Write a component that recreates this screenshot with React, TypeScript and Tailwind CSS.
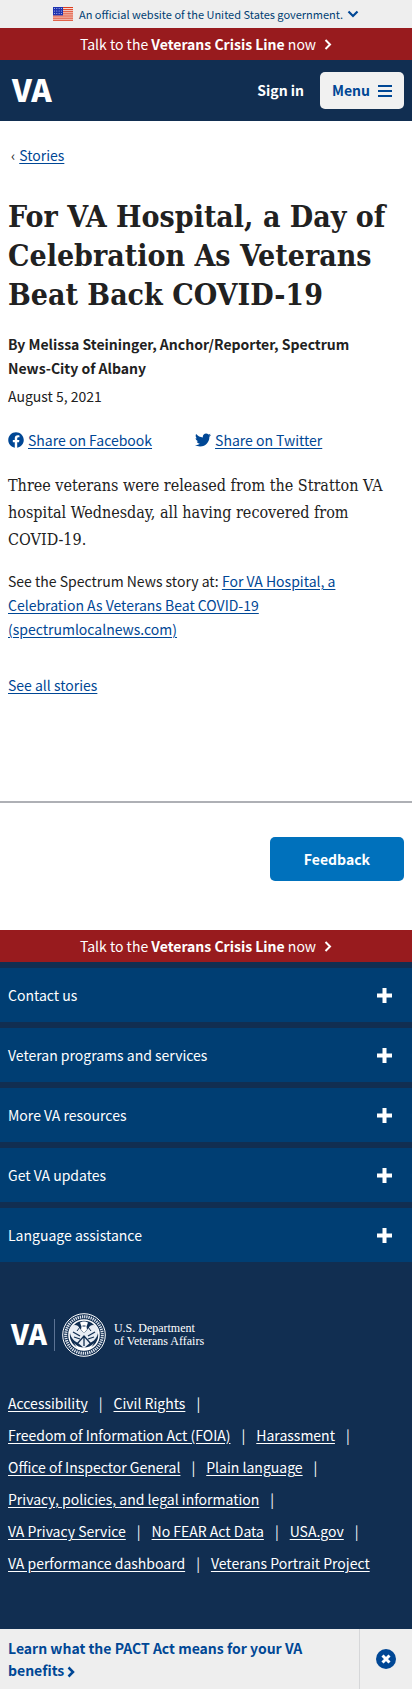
import React from "react";

const links: string[][] = [
  ["Accessibility", "Civil Rights"],
  ["Freedom of Information Act (FOIA)", "Harassment"],
  ["Office of Inspector General", "Plain language"],
  ["Privacy, policies, and legal information"],
  ["VA Privacy Service", "No FEAR Act Data", "USA.gov"],
  ["VA performance dashboard", "Veterans Portrait Project"],
];

const sections = [
  "Contact us",
  "Veteran programs and services",
  "More VA resources",
  "Get VA updates",
  "Language assistance",
];

function Flag() {
  return (
    <svg width="20" height="14" viewBox="0 0 20 14" aria-hidden="true">
      <rect width="20" height="14" fill="#fff" />
      {[0, 2.1, 4.2, 6.3, 8.4, 10.5, 12.6].map((y) => (
        <rect key={y} y={y} width="20" height="1.2" fill="#db3e1f" />
      ))}
      <rect width="10" height="8.400" fill="#1e33b1" />
      {[1.5, 4, 6.5].map((y) =>
        [1.5, 3.8, 6.1, 8.4].map((x) => (
          <circle key={`${x}-${y}`} cx={x} cy={y} r="0.5" fill="#cfd6f5" />
        )),
      )}
    </svg>
  );
}

function CrisisLine() {
  return (
    <div className="flex h-8 items-center justify-center bg-[#981b1e]">
      <button type="button" className="flex items-center gap-2 text-[14px] leading-6 text-white">
        <span>
          Talk to the <strong className="font-bold">Veterans Crisis Line</strong> now
        </span>
        <svg width="8" height="12" viewBox="0 0 8 12" fill="none" stroke="#fff" strokeWidth="2" aria-hidden="true">
          <path d="M1.500 2 6 6.500l-4.500 4.500" />
        </svg>
      </button>
    </div>
  );
}

function Seal() {
  return (
    <svg width="44" height="44" viewBox="0 0 44 44" fill="none" aria-hidden="true">
      <circle cx="22" cy="22" r="21.300" stroke="#fff" strokeWidth="1" />
      <circle cx="22" cy="22" r="18.300" stroke="#dfe5ee" strokeWidth="3" strokeDasharray="1.300 0.900" />
      <circle cx="22" cy="22" r="15" stroke="#fff" strokeWidth="1.600" />
      <path d="M8 15c2-3 5-4 8-2 2 2 3 5 6 7 3-2 4-5 6-7 3-2 6-1 8 2 1 7-2 12-8 15l-6 5-6-5c-6-3-9-8-8-15Z" fill="#e8edf4" />
      <path d="M18 9.500c2-1.500 6-1.500 8 0l-1.500 4 .5 3-3 3.500-3-3.500.5-3Z" fill="#fff" />
      <path d="m11 19 7 4M33 19l-7 4M12 24l6 2M32 24l-6 2M15 31l7-8 7 8M22 24v9" stroke="#112e51" strokeWidth="1.300" />
      <path d="M18 14l-3 4M26 14l3 4M20.500 13h3" stroke="#112e51" />
      <path d="M12 30c5 6 15 6 20 0l-3 5c-4 3-10 3-14 0Z" fill="#fff" />
    </svg>
  );
}

export default function App() {
  return (
    <div className="bg-white font-['Noto_Sans_CJK_SC',sans-serif] text-[14px] leading-6 text-[#212121]">
      <div className="flex h-7 items-center justify-center bg-[#eee]">
        <button type="button" className="flex items-center text-[11px] leading-4 text-[#003e73]">
          <Flag />
          <span className="ml-1.5">An official website of the United States government.</span>
          <svg className="ml-1" width="12" height="8" viewBox="0 0 12 8" fill="none" stroke="#004795" strokeWidth="2.200" aria-hidden="true">
            <path d="m1.500 1.500 4.500 4.500 4.500-4.500" />
          </svg>
        </button>
      </div>
      <CrisisLine />
      <header className="flex h-[61px] items-center justify-between bg-[#112e51] pr-2 pl-3">
        <a href="#home" className="pb-1 text-[31px] leading-8 font-black text-white">VA</a>
        <div className="flex items-center gap-4">
          <button type="button" className="pb-0.5 font-bold text-white">Sign in</button>
          <button type="button" className="flex h-[37px] items-center gap-2 rounded-[5px] bg-[#f1f1f1] px-3 font-bold text-[#004795]">
            <span className="pb-0.5">Menu</span>
            <svg width="14" height="12" viewBox="0 0 14 12" fill="#004795" aria-hidden="true">
              <path d="M0 0h14v2H0zM0 5h14v2H0zM0 10h14v2H0z" />
            </svg>
          </button>
        </div>
      </header>

      <main className="px-2">
        <nav aria-label="Breadcrumb" className="flex gap-1 pt-[22px] pl-[3px]">
          <span>‹</span>
          <a href="#stories" className="text-[#004795] underline underline-offset-2">Stories</a>
        </nav>
        <h1 className="mt-[30px] font-['DejaVu_Serif_Condensed','DejaVu_Serif',serif] text-[30px] leading-[39px] font-bold">
          For VA Hospital, a Day of Celebration As Veterans Beat Back COVID-19
        </h1>
        <p className="mt-[18px] font-bold">
          By Melissa Steininger, Anchor/Reporter, Spectrum <span className="whitespace-nowrap">News-City</span> of Albany
        </p>
        <p className="mt-1">August 5, 2021</p>
        <div className="mt-5 flex gap-[43px] text-[#004795]">
          <a href="#facebook" className="flex items-center gap-1">
            <svg width="16" height="16" viewBox="0 0 512 512" fill="currentColor" aria-hidden="true">
              <path d="M504 256C504 119 393 8 256 8S8 119 8 256c0 123.780 90.690 226.380 209.250 245V327.690h-63V256h63v-54.640c0-62.150 37-96.480 93.670-96.480 27.140 0 55.520 4.840 55.520 4.840v61h-31.280c-30.800 0-40.410 19.120-40.410 38.730V256h68.780l-11 71.690h-57.780V501C413.310 482.380 504 379.780 504 256z" />
            </svg>
            <span className="underline underline-offset-2">Share on Facebook</span>
          </a>
          <a href="#twitter" className="flex items-center gap-1">
            <svg width="16" height="16" viewBox="0 0 512 512" fill="currentColor" aria-hidden="true">
              <path d="M459.370 151.716c.325 4.548.325 9.097.325 13.645 0 138.720-105.583 298.558-298.558 298.558-59.452 0-114.680-17.219-161.137-47.106 8.447.974 16.568 1.299 25.340 1.299 49.055 0 94.213-16.568 130.274-44.832-46.132-.975-84.792-31.188-98.112-72.772 6.498.974 12.995 1.624 19.818 1.624 9.421 0 18.843-1.300 27.614-3.573-48.081-9.747-84.143-51.980-84.143-102.985v-1.299c13.969 7.797 30.214 12.670 47.431 13.319-28.264-18.843-46.781-51.005-46.781-87.391 0-19.492 5.197-37.360 14.294-52.954 51.655 63.675 129.300 105.258 216.365 109.807-1.624-7.797-2.599-15.918-2.599-24.040 0-57.828 46.782-104.934 104.934-104.934 30.213 0 57.502 12.670 76.670 33.137 23.715-4.548 46.456-13.320 66.599-25.340-7.798 24.366-24.366 44.833-46.132 57.827 21.117-2.273 41.584-8.122 60.426-16.243-14.292 20.791-32.161 39.308-52.628 54.253z" />
            </svg>
            <span className="underline underline-offset-2">Share on Twitter</span>
          </a>
        </div>
        <p className="mt-5 font-['DejaVu_Serif_Condensed','DejaVu_Serif',serif] text-[16px] leading-[27px]">
          Three veterans were released from the Stratton VA hospital Wednesday, all having recovered from{" "}
          <span className="whitespace-nowrap">COVID-19.</span>
        </p>
        <p className="mt-4">
          See the Spectrum News story at:{" "}
          <a href="#article" className="text-[#004795] underline underline-offset-2">
            For VA Hospital, a Celebration As Veterans Beat COVID-19 (spectrumlocalnews.com)
          </a>
        </p>
        <p className="mt-8">
          <a href="#all-stories" className="text-[#004795] underline underline-offset-2">See all stories</a>
        </p>
      </main>

      <div className="mt-[104px] flex justify-end border-t-2 border-[#aeb0b5] px-2 pt-[34px] pb-[49px]">
        <button type="button" className="h-11 rounded-[5px] bg-[#0071bc] px-[34px] font-bold text-white">Feedback</button>
      </div>

      <footer className="bg-[#112e51] text-white">
        <CrisisLine />
        <div className="flex flex-col gap-[6px] pt-[6px]">
          {sections.map((s) => (
            <button key={s} type="button" className="flex h-[54px] items-center justify-between bg-[#003e73] pr-5 pl-2 text-left">
              {s}
              <svg width="15" height="15" viewBox="0 0 15 15" fill="#fff" aria-hidden="true">
                <path d="M5.500 0h4v5.500H15v4H9.500V15h-4V9.500H0v-4h5.500z" />
              </svg>
            </button>
          ))}
        </div>
        <div className="flex items-center pt-[51px] pl-[11px]">
          <span className="pb-1 text-[28px] leading-8 font-black">VA</span>
          <span className="mx-[7px] h-8 w-px bg-[#5c7394]" />
          <Seal />
          <span className="ml-2 font-['Liberation_Serif',serif] text-[12px] leading-[13px]">
            U.S. Department
            <br />
            of Veterans Affairs
          </span>
        </div>
        <ul className="px-2 pt-[30px] pb-[50px] leading-8">
          {links.map((row, r) => (
            <li key={row[0]}>
              {row.map((name, i) => (
                <React.Fragment key={name}>
                  <a href="#footer" className="underline underline-offset-2">{name}</a>
                  {(r < links.length - 1 || i < row.length - 1) && <span className="mx-[11px]">|</span>}
                </React.Fragment>
              ))}
            </li>
          ))}
        </ul>
      </footer>

      <aside className="flex h-[60px] bg-[#eee] font-bold text-[#004795]">
        <a href="#pact" className="flex-1 py-2 pr-8 pl-2 leading-[22px]">
          Learn what the PACT Act means for your VA benefits{" "}
          <svg className="inline" width="8" height="12" viewBox="0 0 8 12" fill="none" stroke="currentColor" strokeWidth="2.500" aria-hidden="true">
            <path d="M1.500 1.500 6 6l-4.500 4.500" />
          </svg>
        </a>
        <button type="button" aria-label="Dismiss" className="flex w-[53px] items-center justify-center border-l border-[#d6d7d9]">
          <svg width="20" height="20" viewBox="0 0 20 20" aria-hidden="true">
            <circle cx="10" cy="10" r="10" fill="#004795" />
            <path d="m6.500 6.500 7 7m0-7-7 7" stroke="#fff" strokeWidth="3" />
          </svg>
        </button>
      </aside>
    </div>
  );
}
